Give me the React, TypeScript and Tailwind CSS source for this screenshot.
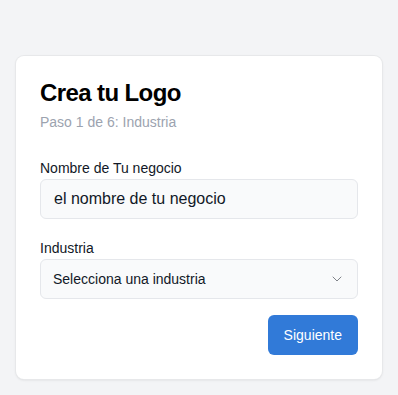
import { ChevronDown } from 'lucide-react';

export default function App() {
  return (
    <div className="min-h-screen bg-[#f3f4f6] px-4 pt-[56px] pb-4 font-['Liberation_Sans',Arial,sans-serif]">
      <div className="bg-white ring-1 ring-[#e7e8ea] rounded-lg shadow-sm px-6 pt-[25px] pb-6">
        <div className="mb-[26px]">
          <h1 className="text-2xl leading-6 font-bold tracking-tight text-black">Crea tu Logo</h1>
          <p className="mt-[7px] text-sm text-[#9ca3af]">Paso 1 de 6: Industria</p>
        </div>

        <div className="mb-[19px]">
          <label className="block text-sm text-[#111827] mb-px">Nombre de Tu negocio</label>
          <div className="h-10 flex items-center px-[13px] bg-[#f9fafb] border border-[#e5e7eb] rounded-md text-base text-[#111827]">
            el nombre de tu negocio
          </div>
        </div>

        <div>
          <label className="block text-sm text-[#111827] mb-px">Industria</label>
          <div className="h-10 flex items-center justify-between px-3 bg-[#f9fafb] border border-[#e5e7eb] rounded-md text-sm text-[#111827]">
            <span>Selecciona una industria</span>
            <ChevronDown className="w-4 h-4 text-[#808389]" strokeWidth={1.5} />
          </div>
        </div>

        <div className="flex justify-end mt-4">
          <button className="h-10 px-4 rounded-md bg-[#317ad8] text-white text-sm">Siguiente</button>
        </div>
      </div>
    </div>
  );
}
